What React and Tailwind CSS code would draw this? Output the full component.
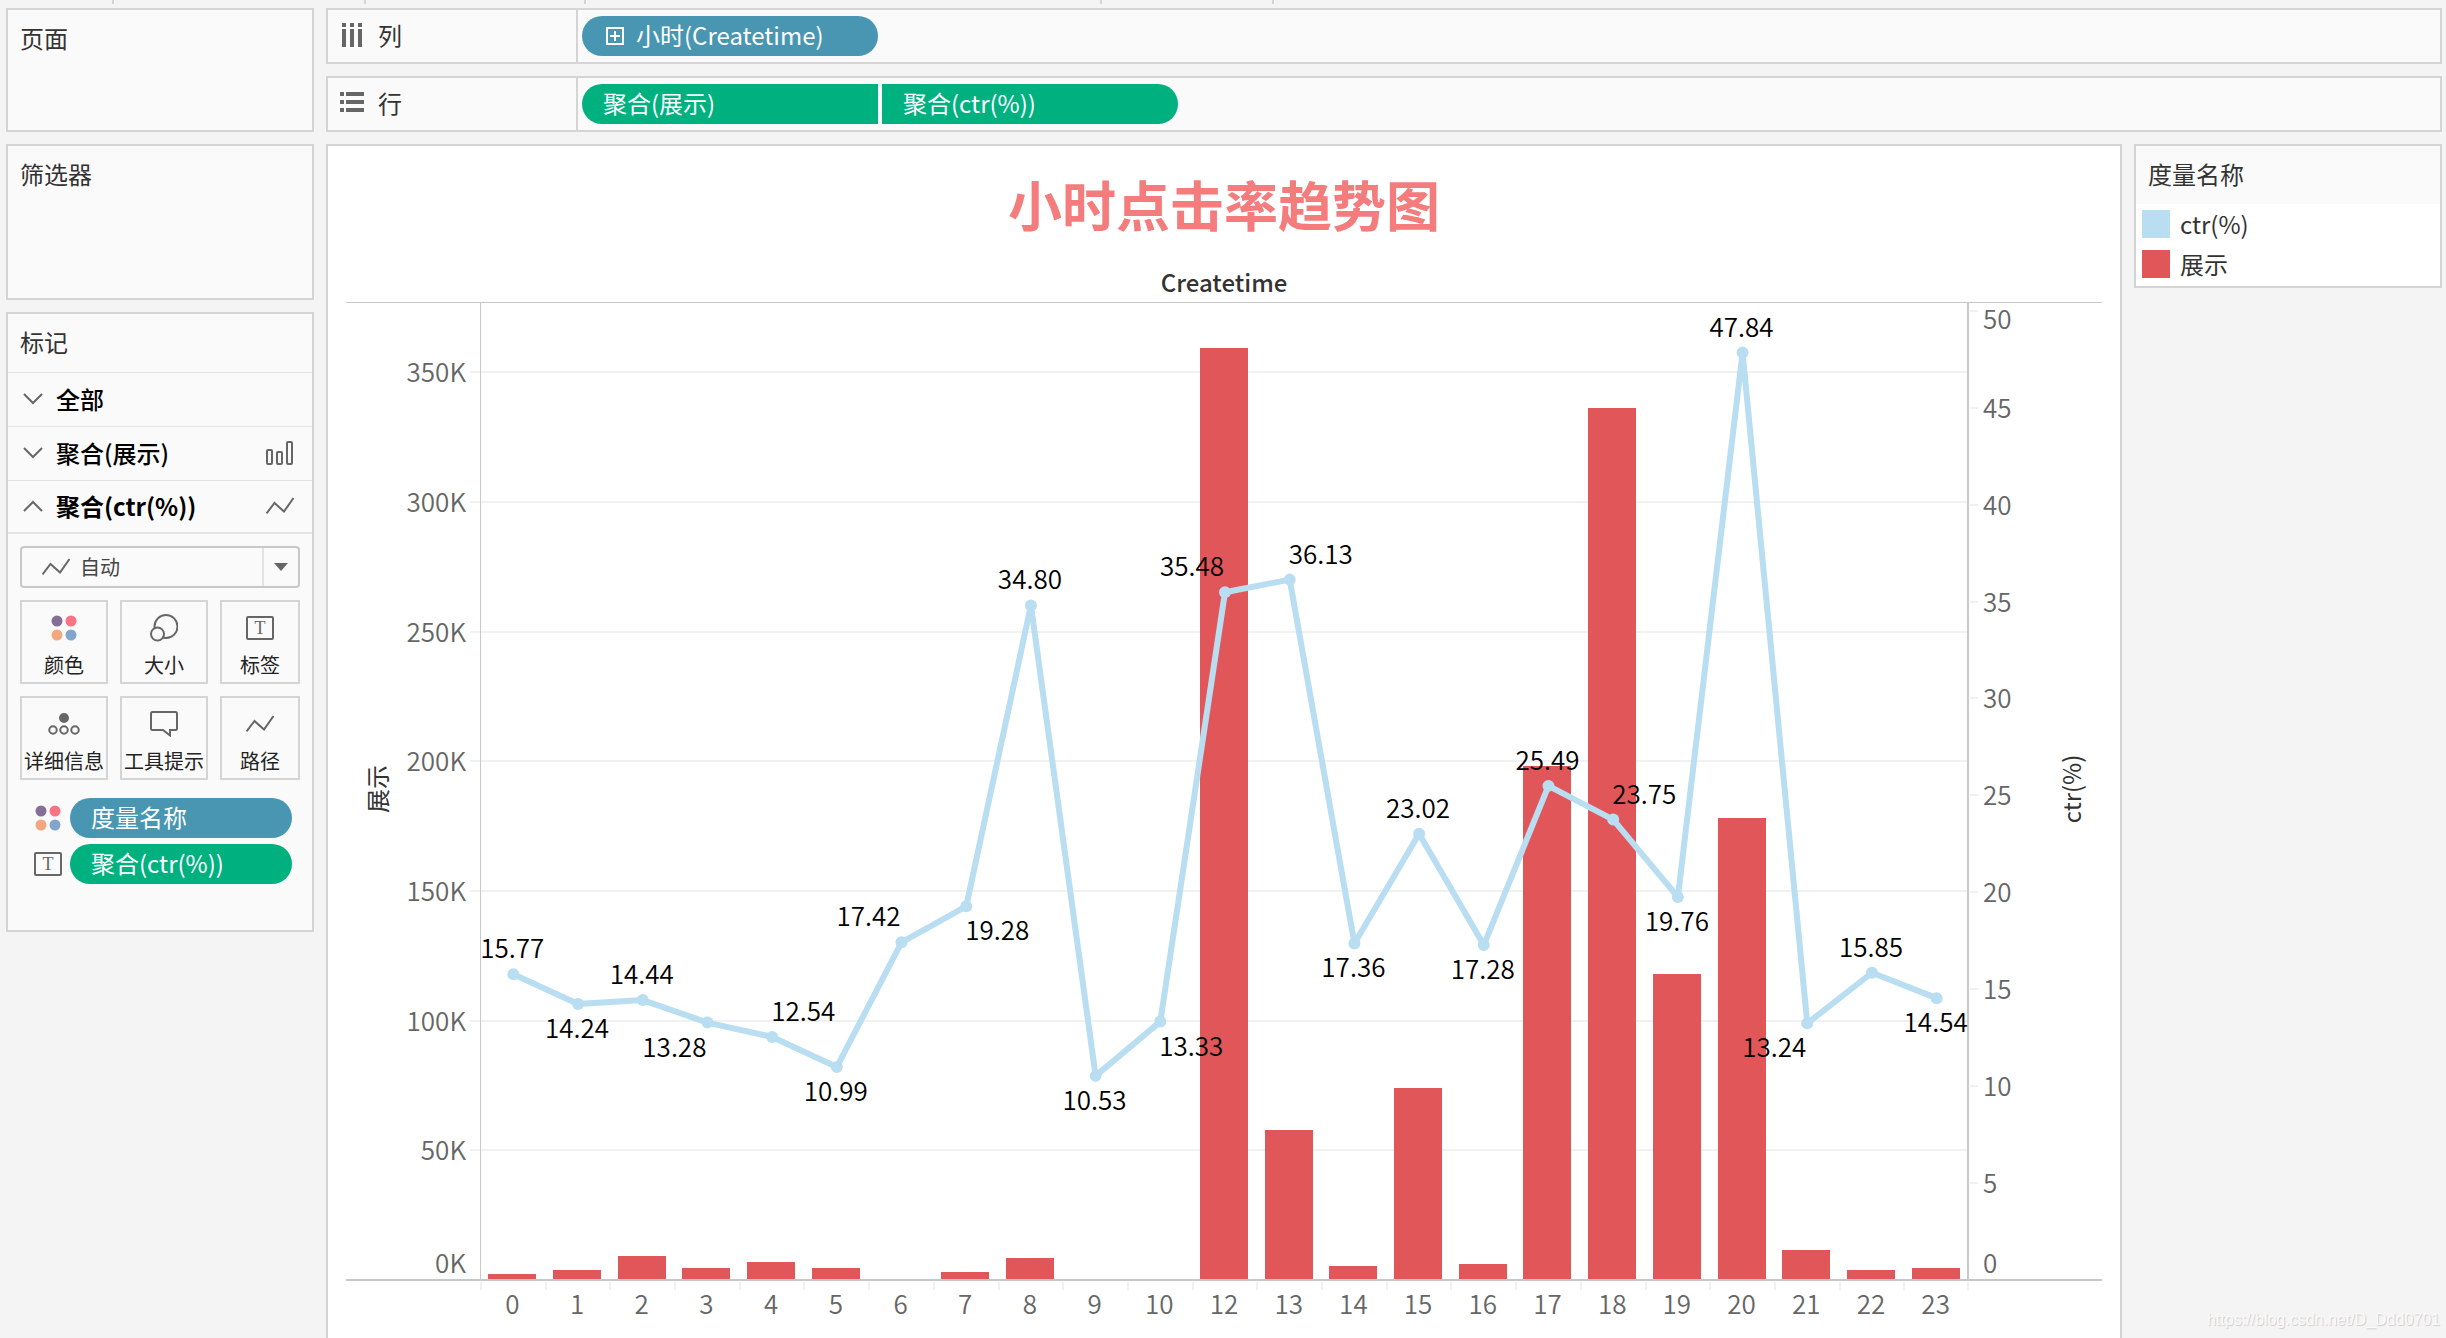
const hours = [
  { hour: 0, shows: 2.3, ctr: 15.77, label: "top" },
  { hour: 1, shows: 3.9, ctr: 14.24, label: "bottom" },
  { hour: 2, shows: 9.2, ctr: 14.44, label: "top" },
  { hour: 3, shows: 4.6, ctr: 13.28, label: "bottom-left" },
  { hour: 4, shows: 6.9, ctr: 12.54, label: "top-right" },
  { hour: 5, shows: 4.6, ctr: 10.99, label: "bottom" },
  { hour: 6, shows: 0, ctr: 17.42, label: "top-left" },
  { hour: 7, shows: 2.9, ctr: 19.28, label: "bottom-right" },
  { hour: 8, shows: 8.5, ctr: 34.8, label: "top" },
  { hour: 9, shows: 0, ctr: 10.53, label: "bottom" },
  { hour: 10, shows: 0, ctr: 13.33, label: "bottom-right" },
  { hour: 12, shows: 359.3, ctr: 35.48, label: "top-left" },
  { hour: 13, shows: 57.7, ctr: 36.13, label: "top-right" },
  { hour: 14, shows: 5.4, ctr: 17.36, label: "bottom" },
  { hour: 15, shows: 74, ctr: 23.02, label: "top" },
  { hour: 16, shows: 6.2, ctr: 17.28, label: "bottom" },
  { hour: 17, shows: 198.1, ctr: 25.49, label: "top" },
  { hour: 18, shows: 336.2, ctr: 23.75, label: "top-right" },
  { hour: 19, shows: 118, ctr: 19.76, label: "bottom" },
  { hour: 20, shows: 178.1, ctr: 47.84, label: "top" },
  { hour: 21, shows: 11.6, ctr: 13.24, label: "bottom-left" },
  { hour: 22, shows: 3.9, ctr: 15.85, label: "top" },
  { hour: 23, shows: 4.6, ctr: 14.54, label: "bottom" },
];

// Plot area inside the chart's viewBox
const WIDTH = 1756;
const HEIGHT = 1036;
const LEFT = 134;
const RIGHT = 1622;
const BASE = 978;
const BAND = (RIGHT - LEFT) / hours.length;
const BAR = 48;

const bandX = (i) => LEFT + BAND * (i + 0.5);
const showsY = (v) => BASE - v * 2.594;
const ctrY = (v) => BASE - v * 19.385;

const Chart = () => {
  const points = hours.map((h, i) => `${bandX(i) + 1},${ctrY(h.ctr)}`).join(" ");

  return (
    <svg viewBox={`0 0 ${WIDTH} ${HEIGHT}`} className="block w-full h-auto text-[26px] font-[350]" role="img" aria-label="小时点击率趋势图">
      {/* Grid and left axis */}
      {[0, 50, 100, 150, 200, 250, 300, 350].map((v) => {
        const y = Math.round(showsY(v));
        return (
          <g key={v}>
            {v > 0 && <rect x={LEFT - 10} y={y - 1} width={RIGHT - LEFT + 10} height="2" className="fill-[#f1f1f1]" />}
            <text x="120" y={v > 0 ? y + 10 : y - 7} textAnchor="end" className="fill-[#666]">
              {v}K
            </text>
          </g>
        );
      })}

      {/* Right axis */}
      {[0, 5, 10, 15, 20, 25, 30, 35, 40, 45, 50].map((v) => {
        const y = Math.round(ctrY(v));
        const offset = v === 0 ? -7 : v === 50 ? 18 : 10;
        return (
          <g key={v}>
            {v > 0 && <rect x={RIGHT + 2} y={y - 1} width="8" height="2" className="fill-[#f1f1f1]" />}
            <text x={RIGHT + 15} y={y + offset} className="fill-[#666]">
              {v}
            </text>
          </g>
        );
      })}

      {/* Bars */}
      {hours.map((h, i) => (
        <rect
          key={h.hour}
          x={Math.round(bandX(i) - BAR / 2)}
          y={Math.round(showsY(h.shows))}
          width={BAR}
          height={BASE - Math.round(showsY(h.shows))}
          className="fill-[#e15759]"
        />
      ))}

      {/* Axis lines */}
      <rect x="0" y="0" width={WIDTH} height="1" className="fill-[#c8c8c8]" />
      <rect x={LEFT} y="0" width="1" height={BASE} className="fill-[#c8c8c8]" />
      <rect x={RIGHT - 1} y="0" width="2" height={BASE} className="fill-[#c8c8c8]" />
      <rect x="0" y={BASE - 1} width={WIDTH} height="2" className="fill-[#c8c8c8]" />

      {/* Hours */}
      {hours.map((h, i) => (
        <g key={h.hour}>
          <rect x={Math.round(LEFT + BAND * i)} y={BASE + 2} width="2" height="8" className="fill-[#f1f1f1]" />
          <text x={bandX(i)} y={BASE + 34} textAnchor="middle" className="fill-[#666]">
            {h.hour}
          </text>
        </g>
      ))}
      <rect x={RIGHT - 1} y={BASE + 2} width="2" height="8" className="fill-[#f1f1f1]" />

      {/* Click rate line */}
      <polyline points={points} className="fill-none stroke-[#b9ddf1] stroke-6" strokeLinejoin="round" />
      {hours.map((h, i) => (
        <circle key={h.hour} cx={bandX(i) + 1} cy={ctrY(h.ctr)} r="6" className="fill-[#b9ddf1]" />
      ))}
      {hours.map((h, i) => {
        const anchor = h.label.endsWith("left") ? "end" : h.label.endsWith("right") ? "start" : "middle";
        const dy = h.label.startsWith("top") ? -16 : 34;
        return (
          <text key={h.hour} x={bandX(i)} y={ctrY(h.ctr) + dy} textAnchor={anchor} className="fill-black">
            {h.ctr.toFixed(2)}
          </text>
        );
      })}

      <text transform="translate(41 487) rotate(-90)" textAnchor="middle" className="fill-[#333] text-[24px] font-normal">
        展示
      </text>
      <text transform="translate(1735 487) rotate(-90)" textAnchor="middle" className="fill-[#333] text-[24px] font-normal">
        ctr(%)
      </text>
    </svg>
  );
};

const BarsIcon = () => (
  <svg width="28" height="24" viewBox="0 0 28 24" className="fill-none stroke-[#666] stroke-2">
    <rect x="1" y="9" width="5" height="14" rx="1" />
    <rect x="11" y="11" width="5" height="12" rx="1" />
    <rect x="21" y="1" width="5" height="22" rx="1" />
  </svg>
);

const LineIcon = () => (
  <svg width="28" height="18" viewBox="0 0 28 18" className="fill-none stroke-[#666] stroke-2">
    <path d="M0.5 16.5L8.5 6L18 14.5L27.5 1" />
  </svg>
);

const Chevron = ({ up }) => (
  <svg width="26" height="16" viewBox="0 0 26 16" className="fill-none stroke-[#666] stroke-2">
    <path d={up ? "M4 13L13 4L22 13" : "M4 3L13 12L22 3"} />
  </svg>
);

const ColorIcon = () => (
  <svg width="26" height="26" viewBox="0 0 26 26">
    <circle cx="6" cy="6" r="5.5" fill="#866f97" />
    <circle cx="20" cy="6" r="5.5" fill="#fa7383" />
    <circle cx="6" cy="20" r="5.5" fill="#f2a77e" />
    <circle cx="20" cy="20" r="5.5" fill="#82a5cc" />
  </svg>
);

const SizeIcon = () => (
  <svg width="28" height="28" viewBox="0 0 28 28" className="fill-[#fafafa] stroke-[#666] stroke-2">
    <circle cx="16" cy="12.5" r="11.5" />
    <circle cx="7.5" cy="20" r="6.5" />
  </svg>
);

const LabelIcon = () => (
  <svg width="28" height="24" viewBox="0 0 28 24">
    <rect x="1" y="1" width="26" height="22" rx="1" className="fill-none stroke-[#666] stroke-2" />
    <text x="14" y="18" textAnchor="middle" className="fill-[#666] font-['Liberation_Serif',serif] text-[18px]">
      T
    </text>
  </svg>
);

const DetailIcon = () => (
  <svg width="32" height="22" viewBox="0 0 32 22" className="fill-none stroke-[#666] stroke-2">
    <circle cx="16" cy="5" r="4" className="fill-[#666]" />
    <circle cx="5" cy="17" r="3.75" />
    <circle cx="16" cy="17" r="3.75" />
    <circle cx="27" cy="17" r="3.75" />
  </svg>
);

const TooltipIcon = () => (
  <svg width="28" height="26" viewBox="0 0 28 26" className="fill-none stroke-[#666] stroke-2">
    <path d="M2.5 1H25.5Q27 1 27 2.5V17.5Q27 19 25.5 19H20V24.5L13 19H2.5Q1 19 1 17.5V2.5Q1 1 2.5 1Z" />
  </svg>
);

const ColumnsIcon = () => (
  <svg width="24" height="24" viewBox="0 0 24 24" className="fill-[#666]">
    {[2, 10, 18].map((x) => (
      <g key={x}>
        <rect x={x} y="0" width="4" height="4" />
        <rect x={x} y="6" width="4" height="18" />
      </g>
    ))}
  </svg>
);

const RowsIcon = () => (
  <svg width="24" height="24" viewBox="0 0 24 24" className="fill-[#666]">
    {[1, 9, 17].map((y) => (
      <g key={y}>
        <rect x="0" y={y} width="4" height="4" />
        <rect x="6" y={y} width="18" height="4" />
      </g>
    ))}
  </svg>
);

const ExpandIcon = () => (
  <svg width="18" height="18" viewBox="0 0 18 18" className="fill-none stroke-white stroke-2">
    <path d="M1 1H17V17H1ZM9 4V14M4 9H14" />
  </svg>
);

const Panel = ({ title, className = "", children }) => (
  <section className={`border-2 border-[#d4d4d4] bg-[#fafafa] text-[#333] ${className}`}>
    <h2 className="px-3 pb-[2px] leading-14">{title}</h2>
    {children}
  </section>
);

const Shelf = ({ icon, title, children }) => (
  <section className="flex h-14 border-2 border-[#d4d4d4] bg-[#fafafa] text-[#333]">
    <h2 className="flex w-[250px] shrink-0 items-center gap-[14px] border-r-2 border-[#d4d4d4] pb-[2px] pl-3">
      {icon}
      {title}
    </h2>
    <div className="flex items-center gap-1 pl-1">{children}</div>
  </section>
);

const MarkRow = ({ title, open, icon }) => (
  <button
    className={`flex w-full items-center gap-[10px] border-t border-[#e3e3e3] pb-[2px] pl-3 pr-[18px] text-black ${open ? "h-[52px]" : "h-[54px]"}`}
  >
    <Chevron up={open} />
    <span className={open ? "font-bold" : "font-medium"}>{title}</span>
    <span className="ml-auto">{icon}</span>
  </button>
);

const MarkButton = ({ icon, label }) => (
  <button className="flex h-21 flex-col items-center border-2 border-[#d4d4d4] pt-1 text-[20px] text-[#222]">
    <span className="flex h-11 items-center">{icon}</span>
    <span className="mt-[3px] whitespace-nowrap leading-6">{label}</span>
  </button>
);

const App = () => {
  return (
    <div className="relative flex min-h-screen flex-col gap-1 bg-[#f4f4f4] font-['Noto_Sans_CJK_SC',sans-serif] text-[24px] leading-8">
      {/* Bottom ends of the toolbar separators */}
      <div className="flex h-1">
        <div className="w-[114px] border-r-2 border-[#d4d4d4]" />
        <div className="w-[252px] border-r-2 border-[#d4d4d4]" />
        <div className="w-[220px] border-r-2 border-[#d4d4d4]" />
        <div className="w-[516px] border-r-2 border-[#d4d4d4]" />
        <div className="w-[172px] border-r-2 border-[#d4d4d4]" />
      </div>

      <div className="flex flex-1 gap-3 pl-[6px] pr-1">
        <aside className="flex w-77 shrink-0 flex-col gap-3">
          <Panel title="页面" className="h-31" />
          <Panel title="筛选器" className="h-39" />

          <Panel title="标记" className="pb-[46px]">
            <MarkRow title="全部" />
            <MarkRow title="聚合(展示)" icon={<BarsIcon />} />
            <MarkRow title="聚合(ctr(%))" open icon={<LineIcon />} />

            <div className="flex flex-col gap-3 border-t-2 border-[#e3e3e3] px-3 pt-3">
              <div className="relative flex h-[42px] items-center rounded-sm border-2 border-[#c8c8c8]">
                <span className="pointer-events-none absolute left-5">
                  <LineIcon />
                </span>
                <select aria-label="标记类型" className="h-full w-full appearance-none bg-transparent pl-[58px] text-[20px] text-[#444]">
                  <option>自动</option>
                </select>
                <span className="pointer-events-none absolute right-0 flex h-full w-9 items-center justify-center border-l-2 border-[#e3e3e3]">
                  <svg width="14" height="8" viewBox="0 0 14 8" className="fill-[#666]">
                    <path d="M0 0H14L7 8Z" />
                  </svg>
                </span>
              </div>

              <div className="grid grid-cols-[88px_88px_80px] gap-3">
                <MarkButton icon={<ColorIcon />} label="颜色" />
                <MarkButton icon={<SizeIcon />} label="大小" />
                <MarkButton icon={<LabelIcon />} label="标签" />
                <MarkButton icon={<DetailIcon />} label="详细信息" />
                <MarkButton icon={<TooltipIcon />} label="工具提示" />
                <MarkButton icon={<LineIcon />} label="路径" />
              </div>
            </div>

            <div className="mt-[18px] flex flex-col gap-[6px] pl-[25px] pr-5 text-white">
              <div className="flex items-center gap-[7px]">
                <span className="flex w-[30px] justify-center">
                  <ColorIcon />
                </span>
                <span className="h-10 flex-1 rounded-full bg-[#4996b2] pl-[21px] leading-[38px]">度量名称</span>
              </div>
              <div className="flex items-center gap-[7px]">
                <span className="flex w-[30px] justify-center">
                  <LabelIcon />
                </span>
                <span className="h-10 flex-1 rounded-full bg-[#00b180] pl-[21px] leading-[38px]">聚合(ctr(%))</span>
              </div>
            </div>
          </Panel>
        </aside>

        <div className="flex min-w-0 flex-1 flex-col gap-3">
          <Shelf icon={<ColumnsIcon />} title="列">
            <span className="flex h-10 w-74 items-center gap-3 rounded-full bg-[#4996b2] pl-6 text-white">
              <ExpandIcon />
              <span className="pb-[2px]">小时(Createtime)</span>
            </span>
          </Shelf>
          <Shelf icon={<RowsIcon />} title="行">
            <span className="h-10 w-74 rounded-l-full bg-[#00b180] pl-[21px] leading-[38px] text-white">聚合(展示)</span>
            <span className="h-10 w-74 rounded-r-full bg-[#00b180] pl-[21px] leading-[38px] text-white">聚合(ctr(%))</span>
          </Shelf>

          <div className="flex flex-1 items-start gap-3">
            <main className="min-w-0 flex-1 self-stretch border-2 border-b-0 border-[#d4d4d4] bg-white px-[18px] pt-[18px]">
              <h1 className="text-center text-[54px] font-bold leading-20 text-[#f47c7c]">小时点击率趋势图</h1>
              <p className="mt-[20px] pb-[2px] text-center font-medium leading-9 text-[#333]">Createtime</p>
              <Chart />
            </main>

            <Panel title="度量名称" className="w-77 shrink-0">
              <ul className="flex flex-col gap-3 bg-white px-[6px] pb-2 pt-[6px]">
                <li className="flex h-7 items-center gap-[10px]">
                  <span className="size-7 bg-[#b9ddf1]" />
                  ctr(%)
                </li>
                <li className="flex h-7 items-center gap-[10px]">
                  <span className="size-7 bg-[#e15759]" />
                  展示
                </li>
              </ul>
            </Panel>
          </div>
        </div>
      </div>

      <a
        href="https://blog.csdn.net/D_Ddd0701"
        className="absolute bottom-[6px] right-[6px] font-['Liberation_Sans',sans-serif] text-[16px] leading-6 text-[#fafafa] [text-shadow:1px_1px_1px_#ccc]"
      >
        https://blog.csdn.net/D_Ddd0701
      </a>
    </div>
  );
};

export default App;
